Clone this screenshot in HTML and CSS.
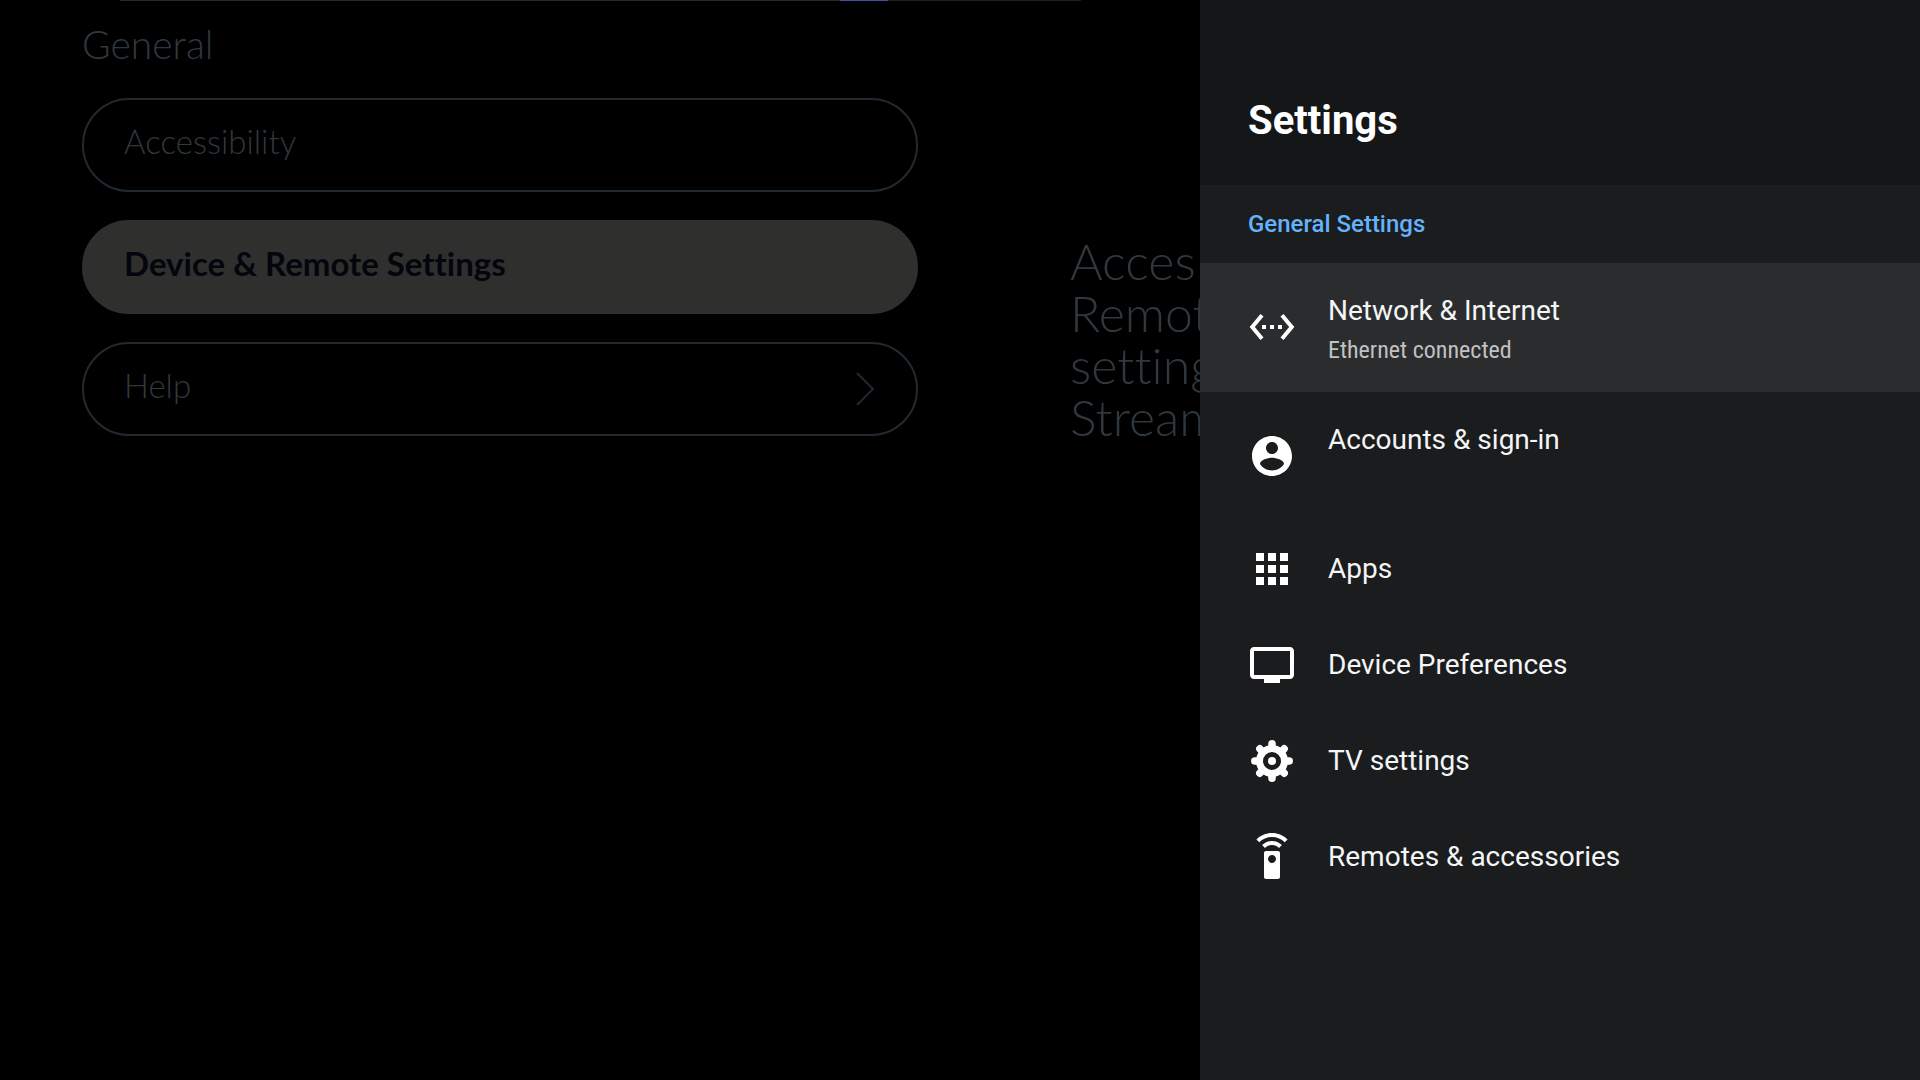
FILE: index.html
```html
<!DOCTYPE html>
<html lang="en">
<head>
<meta charset="utf-8">
<meta name="viewport" content="width=device-width, initial-scale=1">
<title>Settings</title>
<link rel="stylesheet" href="styles.css">
</head>
<body>
<div class="screen">
  <main class="backdrop">
    <div class="edge"><span class="edge-line"></span><span class="edge-accent"></span><span class="edge-rest"></span></div>
    <div class="columns">
      <section class="general">
        <h2 class="group-title">General</h2>
        <div class="pills">
          <button type="button" class="pill">Accessibility</button>
          <button type="button" class="pill pill-active">Device &amp; Remote Settings</button>
          <button type="button" class="pill">Help
            <svg class="chevron" viewBox="0 0 20 36" aria-hidden="true"><path d="M2 2l16 16L2 34"/></svg>
          </button>
        </div>
      </section>
      <p class="description">Acces<br>Remot<br>setting<br>Stream</p>
    </div>
  </main>

  <aside class="panel">
    <header class="panel-header"><h1 class="panel-title">Settings</h1></header>
    <h2 class="panel-section">General Settings</h2>
    <nav class="menu">
      <button type="button" class="item item-tall item-active">
        <svg class="icon" viewBox="0 0 24 24" aria-hidden="true"><path d="M7.77 6.76L6.23 5.48.82 12l5.41 6.52 1.54-1.28L3.42 12l4.35-5.24zM7 13h2v-2H7v2zm10-2h-2v2h2v-2zm-6 2h2v-2h-2v2zm6.77-7.52l-1.54 1.28L20.58 12l-4.35 5.24 1.54 1.28L23.18 12l-5.41-6.52z"/></svg>
        <span class="text"><span class="label">Network &amp; Internet</span><span class="summary">Ethernet connected</span></span>
      </button>
      <button type="button" class="item item-tall">
        <svg class="icon" viewBox="0 0 24 24" aria-hidden="true"><path d="M12 2C6.48 2 2 6.48 2 12s4.48 10 10 10 10-4.48 10-10S17.52 2 12 2zm0 3c1.66 0 3 1.34 3 3s-1.34 3-3 3-3-1.34-3-3 1.34-3 3-3zm0 14.2c-2.5 0-4.71-1.28-6-3.22.03-1.99 4-3.08 6-3.08 1.99 0 5.97 1.09 6 3.08-1.29 1.94-3.5 3.22-6 3.22z"/></svg>
        <span class="text"><span class="label">Accounts &amp; sign-in</span></span>
      </button>
      <button type="button" class="item">
        <svg class="icon" viewBox="0 0 24 24" aria-hidden="true"><path d="M4 8h4V4H4v4zm6 12h4v-4h-4v4zm-6 0h4v-4H4v4zm0-6h4v-4H4v4zm6 0h4v-4h-4v4zm6-10v4h4V4h-4zm-6 4h4V4h-4v4zm6 6h4v-4h-4v4zm0 6h4v-4h-4v4z"/></svg>
        <span class="text"><span class="label">Apps</span></span>
      </button>
      <button type="button" class="item">
        <svg class="icon" viewBox="0 0 24 24" aria-hidden="true"><path d="M21 3H3c-1.11 0-2 .89-2 2v12c0 1.1.89 2 2 2h5v2h8v-2h5c1.1 0 1.99-.9 1.99-2L23 5c0-1.11-.9-2-2-2zm0 14H3V5h18v12z"/></svg>
        <span class="text"><span class="label">Device Preferences</span></span>
      </button>
      <button type="button" class="item">
        <svg class="icon" viewBox="0 0 48 48" aria-hidden="true">
          <circle cx="24" cy="24" r="12.5" fill="none" stroke="currentColor" stroke-width="7"/>
          <circle cx="24" cy="24" r="4"/>
          <path fill="none" stroke="currentColor" stroke-width="7.5" stroke-linecap="round" d="M24 10V6.800M24 38v3.200M10 24H6.800M38 24h3.200M14.100 14.100l-2.300-2.300M33.900 14.100l2.300-2.300M14.100 33.900l-2.300 2.300M33.900 33.900l2.300 2.300"/>
        </svg>
        <span class="text"><span class="label">TV settings</span></span>
      </button>
      <button type="button" class="item">
        <svg class="icon" viewBox="0 0 24 24" aria-hidden="true"><path d="M15 9H9c-.55 0-1 .45-1 1v12c0 .55.45 1 1 1h6c.55 0 1-.45 1-1V10c0-.55-.45-1-1-1zm-3 6c-1.1 0-2-.9-2-2s.9-2 2-2 2 .9 2 2-.9 2-2 2zM7.05 6.05l1.41 1.41C9.37 6.56 10.62 6 12 6s2.63.56 3.54 1.46l1.41-1.41C15.68 4.78 13.93 4 12 4s-3.68.78-4.95 2.05zM12 0C8.96 0 6.21 1.23 4.22 3.22l1.41 1.41C7.26 3.01 9.51 2 12 2s4.74 1.01 6.36 2.64l1.41-1.41C17.79 1.23 15.04 0 12 0z"/></svg>
        <span class="text"><span class="label">Remotes &amp; accessories</span></span>
      </button>
    </nav>
  </aside>
</div>
</body>
</html>
```
FILE: styles.css
```css
* { box-sizing: border-box; }

body {
  margin: 0;
  background: #000;
  font-family: Roboto, "Liberation Sans", sans-serif;
}

h1, h2, p { margin: 0; }

button {
  margin: 0;
  border: 0;
  background: none;
  color: inherit;
  font: inherit;
  text-align: left;
  cursor: pointer;
}

.screen {
  display: grid;
  grid-template-columns: 62.5% 37.5%;
  min-height: 100vh;
}

/* Dimmed page behind the panel */
.backdrop {
  min-width: 0;
  overflow: hidden;
  font-family: Lato, "Open Sans", sans-serif;
  font-weight: 300;
  font-variant-ligatures: none;
  color: #30383f;
}

.edge {
  display: grid;
  grid-template-columns: 720fr 48fr 193fr 119fr;
  height: 1px;
  padding-left: 120px;
}
.edge-line { background: #222a31; }
.edge-accent { background: #4650a0; }
.edge-rest { background: #1e1e1e; }

.columns {
  display: grid;
  grid-template-columns: minmax(0, 836fr) minmax(0, 130fr);
  column-gap: 152px;
  padding-left: 82px;
}

.general { padding-top: 20px; }

.group-title {
  font-size: 39px;
  font-weight: 300;
  line-height: 46px;
}

.pills {
  display: flex;
  flex-direction: column;
  gap: 28px;
  margin-top: 31px;
}

.pill {
  display: flex;
  align-items: center;
  justify-content: space-between;
  height: 94px;
  padding: 0 41px 8px 40px;
  border: 2px solid #222a31;
  border-radius: 47px;
  font-size: 33px;
  line-height: 40px;
}

.pill-active {
  border-color: #2f3031;
  background: #2f2f2e;
  color: #03060c;
  font-weight: 700;
}

.chevron {
  width: 20px;
  height: 36px;
  margin-top: 8px;
  fill: none;
  stroke: #20282f;
  stroke-width: 2;
}

.description {
  padding-top: 234px;
  font-size: 50px;
  line-height: 52px;
}

/* Settings panel */
.panel {
  background: #1a1c1e;
  color: #f4f5f6;
}

.panel-header {
  padding: 97px 48px 40px;
  background: #141618;
}

.panel-title {
  color: #fff;
  font-size: 40px;
  font-weight: 700;
  line-height: 48px;
}

.panel-section {
  padding: 24px 48px;
  color: #64b2fb;
  font-size: 24px;
  font-weight: 500;
  line-height: 30px;
}

.menu {
  display: flex;
  flex-direction: column;
}

.item {
  display: flex;
  align-items: center;
  gap: 32px;
  min-height: 96px;
  padding: 0 48px;
}

.item-tall {
  align-items: flex-start;
  min-height: 129px;
  padding-top: 31px;
}
.item-tall .icon { margin-top: 9px; }

.item-active { background: #2b2c2e; }

.icon {
  flex: none;
  width: 48px;
  height: 48px;
  fill: currentColor;
  color: #fff;
}

.text {
  display: flex;
  flex-direction: column;
  gap: 5px;
}

.label {
  font-size: 28px;
  line-height: 34px;
}

.summary {
  color: #c0c1c2;
  font-family: "Roboto Condensed", Roboto, sans-serif;
  font-size: 24px;
  line-height: 34px;
}
```
